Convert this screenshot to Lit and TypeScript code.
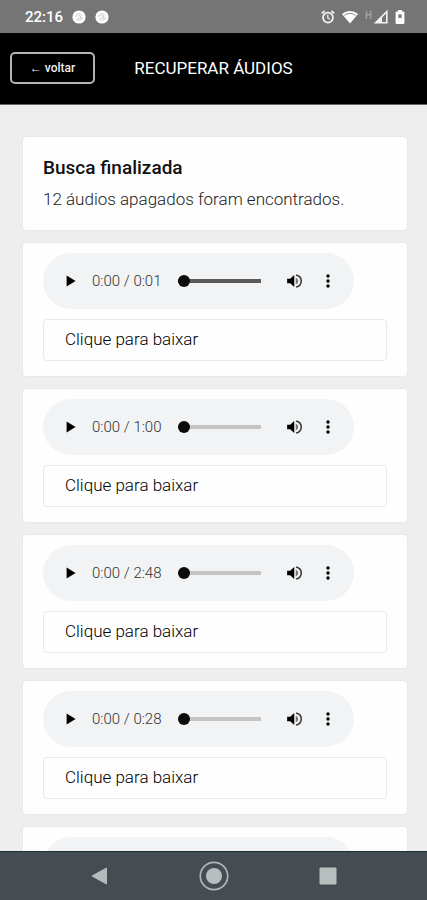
import { LitElement, html, css, nothing } from "lit";
import { customElement, property } from "lit/decorators.js";
import { classMap } from "lit/directives/class-map.js";

interface Clip {
  /** Empty while the recording's details are still being read. */
  length: string;
  loaded: boolean;
}

const CLIPS: Clip[] = [
  { length: "0:01", loaded: true },
  { length: "1:00", loaded: false },
  { length: "2:48", loaded: false },
  { length: "0:28", loaded: false },
  { length: "", loaded: false },
];

@customElement("status-bar")
class StatusBar extends LitElement {
  static styles = css`
    :host {
      display: flex;
      align-items: center;
      justify-content: space-between;
      height: 33px;
      flex: none;
      padding: 0 22px 0 25px;
      background: #757575;
      color: #fff;
      box-sizing: border-box;
      font-size: 15px;
      font-weight: 500;
    }
    .group {
      display: flex;
      align-items: center;
    }
    .left {
      gap: 9px;
    }
    .right {
      gap: 7px;
    }
    .signal {
      display: flex;
      gap: 2px;
    }
    .network {
      font-size: 10px;
      line-height: 12px;
      color: #a6a6a6;
    }
    svg {
      display: block;
    }
  `;

  private badge() {
    return html`<svg width="14" height="14" viewBox="0 0 14 14" aria-hidden="true">
      <circle cx="7" cy="7" r="6.6" fill="#fff" />
      <path d="M3.600 7a3.400 3.400 0 0 1 6.400-1.600M10.400 7A3.400 3.400 0 0 1 4 8.600M5.600 5.800h3v2.400h-3" fill="none" stroke="#ccc" stroke-width="1" />
    </svg>`;
  }

  render() {
    return html`
      <div class="group left">
        <span>22:16</span>${this.badge()}${this.badge()}
      </div>
      <div class="group right">
        <svg width="14" height="14" viewBox="0 0 14 14" fill="none" stroke="#f4f4f4" aria-hidden="true">
          <circle cx="7" cy="7.6" r="5" stroke-width="1.7" />
          <path d="M.8 3.4 3.6 1M13.2 3.4 10.4 1" stroke-width="1.7" />
          <path d="M6.8 4.8v3.1l2.2 1.4" stroke-width="1.2" />
        </svg>
        <svg width="16" height="14" viewBox="0 0 16 14" aria-hidden="true">
          <path d="M0 4a12 12 0 0 1 16 0L8 13.6z" fill="#fff" />
          <path d="M2.2 5.4a9.4 9.4 0 0 1 11.6 0" fill="none" stroke="#8c8c8c" stroke-width="1" />
        </svg>
        <div class="signal">
          <span class="network">H</span>
          <svg width="14" height="14" viewBox="0 0 14 14" aria-hidden="true">
            <path d="M1.6 12.8 12.8 1.6v11.2z" fill="none" stroke="#f4f4f4" stroke-width="1.6" />
            <path d="M1.6 12.8 8 6.4v6.4z" fill="#f4f4f4" />
          </svg>
        </div>
        <svg width="10" height="14" viewBox="0 0 10 14" aria-hidden="true">
          <path d="M3 0h4v1.6h1.4a1 1 0 0 1 1 1V13a1 1 0 0 1-1 1H1.6a1 1 0 0 1-1-1V2.600a1 1 0 0 1 1-1H3z" fill="#fff" />
          <path d="M3.400 4.400h3.200V8H3.400z" fill="#777" />
        </svg>
      </div>
    `;
  }
}

@customElement("audio-card")
class AudioCard extends LitElement {
  @property() length = "";
  @property({ type: Boolean }) loaded = false;

  static styles = css`
    :host {
      display: block;
      padding: 10px 20px 15px;
      border: 1px solid #e8e8e8;
      border-radius: 4px;
      background: #fefefe;
    }
    .player {
      display: flex;
      align-items: center;
      height: 56px;
      max-width: 311px;
      padding: 0 14px 0 16px;
      border-radius: 28px;
      background: #f1f3f4;
      box-sizing: border-box;
    }
    button {
      font: inherit;
      border: 0;
      background: none;
      padding: 0;
      color: #000;
    }
    .icon {
      display: grid;
      place-items: center;
      width: 24px;
      height: 32px;
      flex: none;
    }
    .time {
      margin-left: 9px;
      flex: none;
      font-size: 15px;
      font-weight: 300;
      color: #333;
    }
    .seek {
      appearance: none;
      flex: 1;
      min-width: 0;
      height: 12px;
      margin: 0 22px 0 16px;
      background: linear-gradient(#c4c4c4, #c4c4c4) center / 100% 4px no-repeat;
    }
    .seek.loaded {
      background-image: linear-gradient(#5a5a5a, #5a5a5a);
    }
    .seek::-webkit-slider-thumb {
      appearance: none;
      width: 12px;
      height: 12px;
      border-radius: 50%;
      background: #0c0c0c;
    }
    .more {
      margin-left: 9px;
    }
    .download {
      display: block;
      width: 100%;
      height: 42px;
      margin-top: 10px;
      padding: 0 21px 2px;
      border: 1px solid #e8e9ea;
      border-radius: 4px;
      text-align: left;
      font-size: 17px;
      font-weight: 300;
      color: #000;
    }
  `;

  private controls() {
    return html`
      <button class="icon" aria-label="Reproduzir">
        <svg width="10" height="12" viewBox="0 0 10 12"><path d="M.6.4v11.200L9.600 6z" /></svg>
      </button>
      <span class="time">0:00 / ${this.length}</span>
      <input class=${classMap({ seek: true, loaded: this.loaded })} type="range" min="0" max="100" value="0" aria-label="Posição" />
      <button class="icon" aria-label="Volume">
        <svg width="18" height="18" viewBox="0 0 24 24">
          <path d="M1.500 9v6h4l5.500 5V4L5.500 9z" />
          <path d="M13 7.500v9c2-.8 3.200-2.500 3.200-4.500S15 8.300 13 7.500z" fill="#777" />
          <path d="M13.500 3.900c4 .9 6.800 4.200 6.800 8.100s-2.800 7.200-6.800 8.100" fill="none" stroke="#333" stroke-width="2" />
        </svg>
      </button>
      <button class="icon more" aria-label="Mais opções">
        <svg width="4" height="16" viewBox="0 0 4 16">
          <circle cx="2" cy="3" r="1.700" /><circle cx="2" cy="8" r="1.700" /><circle cx="2" cy="13" r="1.700" />
        </svg>
      </button>
    `;
  }

  render() {
    return html`
      <div class="player">${this.length ? this.controls() : nothing}</div>
      ${this.length ? html`<button class="download">Clique para baixar</button>` : nothing}
    `;
  }
}

@customElement("nav-bar")
class NavBar extends LitElement {
  static styles = css`
    :host {
      display: flex;
      justify-content: center;
      align-items: center;
      gap: 82px;
      height: 49px;
      flex: none;
      border-top: 1px solid #1d2f38;
      background: #454d52;
      box-sizing: border-box;
    }
    button {
      display: grid;
      place-items: center;
      width: 32px;
      height: 32px;
      padding: 0;
      border: 0;
      background: none;
    }
  `;

  render() {
    return html`
      <button aria-label="Voltar">
        <svg width="18" height="18" viewBox="0 0 18 18"><path d="M1 9 15.500 1v16z" fill="#b5babc" stroke="#b5babc" stroke-linejoin="round" /></svg>
      </button>
      <button aria-label="Início">
        <svg width="30" height="30" viewBox="0 0 30 30">
          <circle cx="15" cy="15" r="13.700" fill="none" stroke="#b0b6b8" stroke-width="1.700" />
          <circle cx="15" cy="15" r="8" fill="#b8bdbe" />
        </svg>
      </button>
      <button aria-label="Recentes">
        <svg width="18" height="18" viewBox="0 0 18 18"><rect x=".5" y=".5" width="17" height="17" rx="1" fill="#b8bfbf" /></svg>
      </button>
    `;
  }
}

@customElement("app-root")
class AppRoot extends LitElement {
  static styles = css`
    :host {
      display: flex;
      flex-direction: column;
      height: 100vh;
      overflow: hidden;
      background: #eee;
      font-family: Roboto, "Noto Sans", sans-serif;
    }
    header {
      display: grid;
      grid-template-columns: 1fr auto 1fr;
      align-items: center;
      flex: none;
      height: 72px;
      padding: 0 10px 2px;
      border-bottom: 1px solid #666;
      background: #000;
      box-sizing: border-box;
    }
    .back {
      justify-self: start;
      width: 85px;
      height: 32px;
      padding: 0;
      border: 2px solid #b4b4b4;
      border-radius: 5px;
      background: #000;
      color: #eee;
      font: 500 12px Roboto, sans-serif;
    }
    h1 {
      margin: 0;
      color: #fff;
      font-size: 17px;
      line-height: 24px;
      font-weight: 400;
    }
    main {
      display: flex;
      flex-direction: column;
      gap: 11px;
      flex: 1;
      min-height: 0;
      padding: 31px 19px 0 22px;
      overflow-y: auto;
      scrollbar-width: none;
    }
    main > * {
      flex: none;
    }
    .summary {
      padding: 19px 20px;
      border: 1px solid #e8e8e8;
      border-radius: 4px;
      background: #fefefe;
    }
    h2 {
      margin: 0;
      font-size: 19px;
      line-height: 24px;
      font-weight: 500;
      color: #111;
    }
    p {
      margin: 7px 0 0;
      font-size: 17px;
      line-height: 24px;
      font-weight: 300;
      color: #222;
    }
  `;

  render() {
    return html`
      <status-bar></status-bar>
      <header>
        <button class="back">← voltar</button>
        <h1>RECUPERAR ÁUDIOS</h1>
      </header>
      <main>
        <section class="summary">
          <h2>Busca finalizada</h2>
          <p>12 áudios apagados foram encontrados.</p>
        </section>
        ${CLIPS.map((clip) => html`<audio-card .length=${clip.length} .loaded=${clip.loaded}></audio-card>`)}
      </main>
      <nav-bar></nav-bar>
    `;
  }
}
